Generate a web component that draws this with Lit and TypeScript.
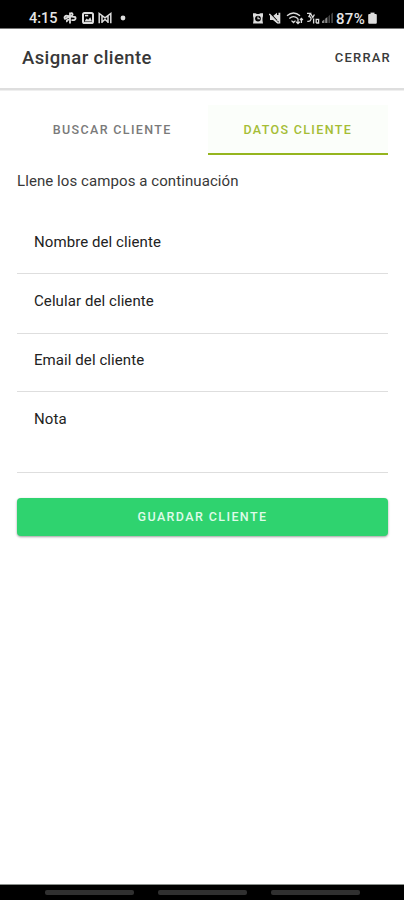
import { LitElement, html, css, svg } from "lit";
import { customElement, property } from "lit/decorators.js";

@customElement("status-bar")
class StatusBar extends LitElement {
  static styles = css`
    :host { display: flex; background: #000; color: #e6e6e6; border-bottom: 1px solid #777;
      padding: 7px 27px 0 29px; box-sizing: border-box; height: 29px; justify-content: space-between;
      font: 500 14.5px/22px Roboto, sans-serif; }
    .side { display: flex; height: 22px; align-items: center; }
    .time, .pct { position: relative; top: 1px; }
    .time { width: 34px; letter-spacing: 0; }
    .pct { width: 32px; letter-spacing: 0.3px; font-size: 15px; }
    svg { display: block; flex: none; fill: none; stroke: #ddd; stroke-width: 1.6; }
    .fill { fill: #ddd; stroke: none; }
    .ink { stroke: #000; stroke-width: 1.3; }
    .dim { fill: #444; stroke: none; }
    .mid { fill: #888; stroke: none; }
  `;
  icon(w: number, gap: number, body: unknown) {
    return html`<svg width=${w} height="14" viewBox="0 0 ${w} 14" style="margin-right:${gap}px">${body}</svg>`;
  }
  render() {
    return html`
      <div class="side">
        <span class="time">4:15</span>
        ${this.icon(14, 5, svg`<path d="M7 1.5V12.5M7 2.5C9.5 1.2 10.5 3.8 8.5 4.8L2 7.8C.8 6 2 4.5 4.5 4.8L12.2 6C13.5 8.5 11 9.6 8.5 8.8M7 8.8C5 8 3 9.5 4.2 11" stroke-width="1.8"/>`)}
        ${this.icon(12, 4, svg`<rect x="1" y="2" width="10" height="10" rx="1.6" stroke-width="2"/><path d="M2.5 10.5L4.5 7.4L6.2 8.7L8.3 6.2L10 10.5Z" class="fill"/><path d="M3 4.6H6.2"/>`)}
        ${this.icon(14, 8, svg`<path d="M1.2 12.2V2.4L7 6.8L12.8 2.4V12.2M4 12V4.5M10 12V4.5M4 11L7 8.5L10 11" stroke-width="1.5"/>`)}
        ${this.icon(6, 0, svg`<circle cx="3" cy="7" r="2.4" class="fill"/>`)}
      </div>
      <div class="side">
        ${this.icon(12, 5, svg`<path d="M1 2.2H3.5L5 3H7L8.5 2.2H11V5L10.5 7V9.5L11 12.6H1L1.5 9.5V7L1 5Z" class="fill"/><circle cx="6" cy="7.6" r="2.9" fill="#000" stroke="none"/><path d="M6 5.4V7.8H8.2" stroke-width="1.1"/>`)}
        ${this.icon(12, 5, svg`<path d="M1 5H4L8 1.8V12.2L4 9H1Z" class="fill"/><path d="M10.4 1.8V12.6M8.8 4V10" stroke-width="1.8"/><path d="M.8 2L8 9.7" class="ink"/><path d="M.3 3L9.5 12.4" stroke-width="1.5"/>`)}
        ${this.icon(18, 2, svg`<path d="M1 4.8C5 1.4 10 1.4 14 4.8M3.3 7.4C6 5.2 9 5.2 11.7 7.4M5.5 9.6L7.5 11.5L9.5 9.6M12 7.5V12.5M10.2 10.8L12 12.6L13.8 10.8M15.4 12V7.4M13.9 9L15.4 7.5L16.9 9" stroke-width="1.3"/>`)}
        ${this.icon(14, 1, svg`<path d="M1 2.4H4.6L3 5.5C6.5 6 5.3 11 1.3 10.4M4.8 3L6.8 6.5L8.4 3.5" stroke-width="1.3"/><path d="M7.6 7.5V12.4M10.2 12V8.4H12.6V12H10.2" stroke-width="1.3"/>`)}
        ${this.icon(13, 2, svg`<path d="M1 12V10.2L3.4 8.4V12Z" class="mid"/><path d="M4.2 12V7.8L6.4 6V12Z" class="mid"/><path d="M7.4 12V5.2L9 3.8V12Z" class="dim"/><path d="M10.2 12V3L12 1.4V12Z" class="dim"/>`)}
        <span class="pct">87%</span>
        ${this.icon(9, 0, svg`<rect x="0.2" y="3" width="8.6" height="9.8" rx="1" class="fill"/><rect x="2.5" y="1.6" width="4" height="2" class="fill"/>`)}
      </div>`;
  }
}

@customElement("form-field")
class FormField extends LitElement {
  @property() label = "";
  static styles = css`
    :host { display: block; box-sizing: border-box; border-bottom: 1px solid #dedede; padding: 17px 17px 0;
      font: 400 15px/20px Roboto, sans-serif; color: #222; }
    .label { letter-spacing: 0.08px; }
  `;
  render() {
    return html`<span class="label">${this.label}</span>`;
  }
}

@customElement("app-root")
class AppRoot extends LitElement {
  static styles = css`
    :host { display: flex; flex-direction: column; width: 404px; height: 900px; background: #fff;
      font-family: Roboto, sans-serif; color: #222; overflow: hidden; }
    header { display: flex; justify-content: space-between; align-items: center; height: 59px; box-sizing: border-box;
      padding: 0 13px 2px 22px; }
    h1 { margin: 0; font-size: 18.5px; line-height: 24px; font-weight: 500; letter-spacing: 0.4px; color: #383838; }
    .close { font-size: 13px; font-weight: 500; letter-spacing: 1.2px; color: #3a3a3a; }
    .rule { height: 3px; background: linear-gradient(#dedede 0 2px, #efefef 2px); }
    main { flex: 1; padding: 14px 16px 0 17px; }
    .tabs { display: flex; height: 50px; }
    .tab { flex: 1; box-sizing: border-box; display: flex; justify-content: center; align-items: center;
      border-bottom: 2px solid transparent; font-size: 12.5px; font-weight: 500; letter-spacing: 1.35px; color: #7a7a7a; }
    .tab:first-child { flex: 0 0 190.5px; }
    .active { background: #fbfefa; color: #a5bd35; border-bottom-color: #95b51e; }
    p { margin: 16px 0 34px; font-size: 15px; line-height: 20px; letter-spacing: 0.08px; color: #383838; }
    .f1 { height: 49px; padding-top: 7px; }
    .f2 { height: 60px; }
    .f3 { height: 58px; padding-top: 16px; }
    .f4 { height: 81px; }
    button { display: block; width: 100%; height: 38px; margin-top: 25px; padding: 0; border: 0; border-radius: 4px;
      background: #2fd36f; color: #dffbe9; font: 500 12.5px/38px Roboto, sans-serif; letter-spacing: 1.4px;
      box-shadow: 0 1px 2px rgba(0,0,0,.25), 0 1px 3px rgba(0,0,0,.15); }
    nav { display: flex; justify-content: center; gap: 24px; height: 16px; box-sizing: border-box;
      background: #000; border-top: 1px solid #8b908c; padding-top: 5px; }
    .pill { width: 89px; height: 5px; border-radius: 2px; background: #303030; }
  `;
  render() {
    return html`
      <status-bar></status-bar>
      <header><h1>Asignar cliente</h1><span class="close">CERRAR</span></header>
      <div class="rule"></div>
      <main>
        <div class="tabs"><div class="tab">BUSCAR CLIENTE</div><div class="tab active">DATOS CLIENTE</div></div>
        <p>Llene los campos a continuación</p>
        <form-field class="f1" label="Nombre del cliente"></form-field>
        <form-field class="f2" label="Celular del cliente"></form-field>
        <form-field class="f3" label="Email del cliente"></form-field>
        <form-field class="f4" label="Nota"></form-field>
        <button>GUARDAR CLIENTE</button>
      </main>
      <nav><span class="pill"></span><span class="pill"></span><span class="pill"></span></nav>`;
  }
}
